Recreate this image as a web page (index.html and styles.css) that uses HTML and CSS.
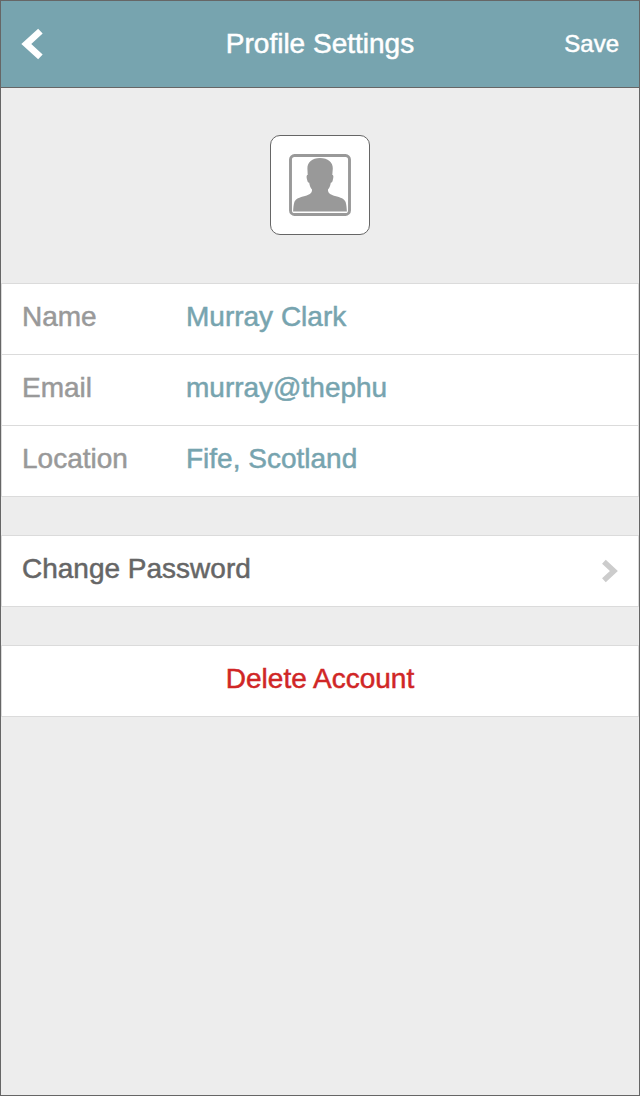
FILE: index.html
```html
<!DOCTYPE html>
<html lang="en">
<head>
<meta charset="utf-8">
<title>Profile Settings</title>
<link rel="stylesheet" href="styles.css">
</head>
<body>
<div class="screen">
  <header class="header">
    <a class="back" aria-label="Back"><svg width="22" height="32" viewBox="0 0 22 32"><path d="M19.400 3.100 5.300 16 19.400 28.900" fill="none" stroke="#fff" stroke-width="6.700"/></svg></a>
    <h1 class="title">Profile Settings</h1>
    <a class="save">Save</a>
  </header>
  <main>
    <div class="photo">
      <div class="avatar">
        <svg width="62" height="62" viewBox="0 0 62 62">
          <rect x="1.500" y="1.500" width="59" height="59" rx="4" fill="none" stroke="#999" stroke-width="2.900"/>
          <path d="M31 4C39 4 44 8.500 43.800 14.500L43.300 21C44.800 21 44.500 23.500 43.800 26C43.400 27.800 43 28.700 41.800 28.800C41.200 32 40.500 34 39 35.500C38.800 39 41 40.500 46 42C51.500 43.500 55.500 44.800 56.600 48C57.500 51 57.700 54 57.900 57.500H4.100C4.300 54 4.500 51 5.400 48C6.500 44.800 10.500 43.500 16 42C21 40.500 23.200 39 23 35.500C21.500 34 20.800 32 20.200 28.800C19 28.700 18.600 27.800 18.200 26C17.500 23.500 17.200 21 18.700 21L18.400 14.500C18.400 8.500 23 4 31 4Z" fill="#999"/>
        </svg>
      </div>
    </div>
    <div class="group">
      <div class="row"><span class="label">Name</span><span class="value">Murray Clark</span></div>
      <div class="row"><span class="label">Email</span><span class="value">murray@thephu</span></div>
      <div class="row"><span class="label">Location</span><span class="value">Fife, Scotland</span></div>
    </div>
    <div class="group">
      <div class="row link">Change Password
        <svg class="chevron" width="17" height="24" viewBox="0 0 17 24"><path d="M2.900 2.700 12.900 12 2.900 21.300" fill="none" stroke="#ccc" stroke-width="5.400"/></svg>
      </div>
    </div>
    <div class="group">
      <div class="row delete">Delete Account</div>
    </div>
  </main>
</div>
</body>
</html>
```
FILE: styles.css
```css
* { box-sizing: border-box; }
body {
  margin: 0;
  font-family: "Liberation Sans", Arial, sans-serif;
  font-size: 28px;
  line-height: 32px;
  -webkit-text-stroke: 0.5px currentColor;
}
.screen {
  height: 1096px;
  border: 1px solid #666;
  background: #ededed;
}
.header {
  display: grid;
  grid-template-columns: 1fr auto 1fr;
  height: 87px;
  padding: 27px 20px 0;
  border-bottom: 1px solid #666;
  background: #77a4af;
  color: #fff;
}
.title {
  margin: 0;
  font-size: 28px;
  font-weight: normal;
}
.back svg,
.chevron {
  display: block;
  overflow: visible;
}
.save {
  justify-self: end;
  font-size: 24px;
}
.photo {
  display: flex;
  justify-content: center;
  padding: 47px 0 48px;
}
.avatar {
  display: flex;
  align-items: center;
  justify-content: center;
  width: 100px;
  height: 100px;
  border: 1px solid #666;
  border-radius: 10px;
  background: #fff;
}
.group {
  margin-bottom: 38px;
  border: 1px solid #dbdbdb;
  background: #fff;
}
.row {
  display: flex;
  height: 70px;
  padding: 17px 20px 0;
}
.row + .row {
  height: 71px;
  border-top: 1px solid #dbdbdb;
}
.label {
  width: 164px;
  color: #999;
}
.value { color: #77a4af; }
.link {
  justify-content: space-between;
  color: #666;
}
.chevron { margin-top: 6px; }
.delete {
  justify-content: center;
  color: #d02626;
}
```
